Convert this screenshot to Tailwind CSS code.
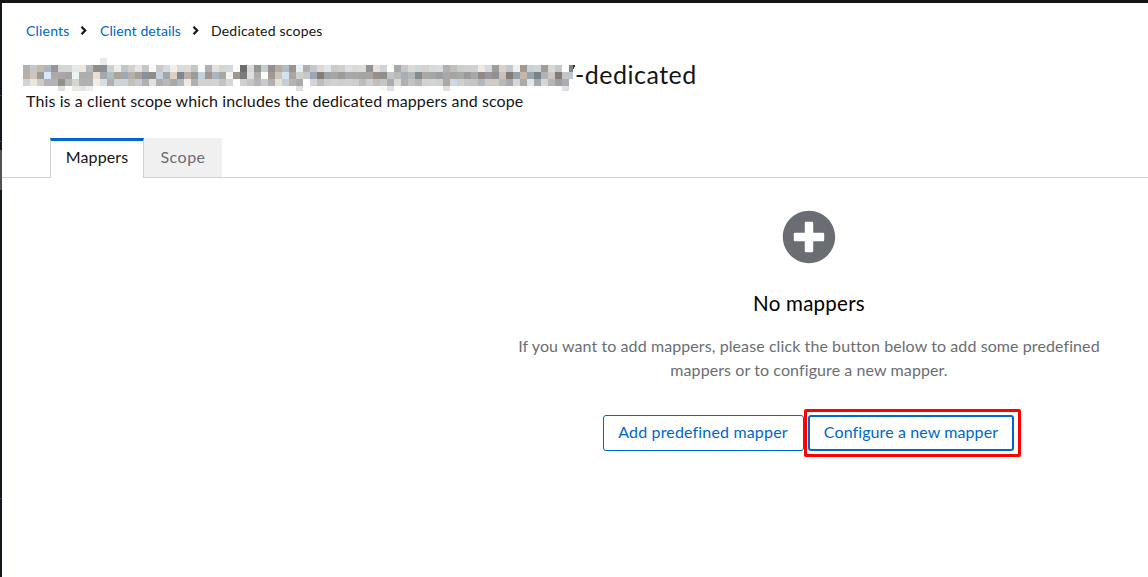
<!DOCTYPE html>
<html lang="en">
<head>
  <meta charset="UTF-8">
  <title>Dedicated scopes</title>
  <script src="https://cdn.jsdelivr.net/npm/@tailwindcss/browser@4"></script>
</head>
<body class="h-[577px] overflow-hidden bg-white font-['Lato','Noto_Sans',sans-serif] text-base text-[#151515] flex flex-col">
  <div class="h-[3px] shrink-0 bg-[#151515]"></div>
  <div class="flex flex-1 min-h-0">
    <!-- sidebar edge -->
    <aside class="w-[2px] shrink-0 bg-[#12191e] flex flex-col">
      <div class="mt-[92px] h-px bg-[#3c3f42]"></div>
      <div class="mt-[45px] h-px bg-[#3c3f42]"></div>
      <div class="mt-2 h-10 bg-[#4f5255]"></div>
      <div class="mt-[308px] h-px bg-[#3c3f42]"></div>
    </aside>

    <main class="flex-1 min-w-0">
      <nav class="flex items-center pl-6 pt-[16px] pb-px h-[39px] text-sm leading-[21px] whitespace-nowrap">
        <a href="#" class="w-[44px] text-[#06c] tracking-[0.2px]">Clients</a>
        <svg class="ml-[9px] mr-[12px] w-[9px] h-[9px]" viewBox="0 0 9 9" fill="none" stroke="#151515" stroke-width="2.2"><path d="M2.500 .8 6.200 4.500 2.500 8.200"/></svg>
        <a href="#" class="w-[81px] text-[#06c] tracking-[0.1px]">Client details</a>
        <svg class="ml-[10px] mr-[11px] w-[9px] h-[9px]" viewBox="0 0 9 9" fill="none" stroke="#151515" stroke-width="2.2"><path d="M2.500 .8 6.200 4.500 2.500 8.200"/></svg>
        <span class="tracking-[0.2px]">Dedicated scopes</span>
      </nav>

      <header class="pl-[21px]">
        <h1 class="flex h-[49px] pt-[16px] text-2xl leading-[32px] whitespace-nowrap">
          <svg id="clientId" class="w-[552px] h-[33px] shrink-0" viewBox="0 0 552 33" shape-rendering="crispEdges"></svg>
          <span class="text-[25px] tracking-[0.5px]">-dedicated</span>
        </h1>
        <p class="pl-[3px] leading-[24px] -mt-[2px] tracking-[0.11px]">This is a client scope which includes the dedicated mappers and scope</p>
      </header>

      <div class="mt-[22px] h-[43px] pt-[3px] flex">
        <div class="w-12 border-b border-[#d2d2d2]"></div>
        <button class="w-[94px] border-t-3 border-t-[#06c] border-x border-x-[#d2d2d2] pb-[5px] tracking-[0.1px]">Mappers</button>
        <button class="w-[78px] bg-[#f0f0f0] border-b border-[#d2d2d2] text-[#6a6e73] pb-px tracking-[0.5px]">Scope</button>
        <div class="flex-1 border-b border-[#d2d2d2]"></div>
      </div>

      <section class="ml-[467px] w-[680px] pt-8 flex flex-col items-center text-center">
        <svg class="w-[54px] h-[54px]" viewBox="0 0 512 512" fill="#6a6e73"><path d="M256 8C119 8 8 119 8 256s111 248 248 248 248-111 248-248S393 8 256 8zm144 276c0 6.600-5.400 12-12 12h-92v92c0 6.600-5.400 12-12 12h-56c-6.600 0-12-5.400-12-12v-92h-92c-6.600 0-12-5.400-12-12v-56c0-6.600 5.400-12 12-12h92v-92c0-6.600 5.400-12 12-12h56c6.600 0 12 5.400 12 12v92h92c6.600 0 12 5.400 12 12v56z"/></svg>
        <h2 class="mt-[24px] text-[20.500px] leading-[30px] text-black tracking-[0.25px]">No mappers</h2>
        <p class="mt-4 w-[600px] leading-6 text-[#6a6e73] tracking-[0.09px]">If you want to add mappers, please click the button below to add some predefined<br>mappers or to configure a new mapper.</p>
        <div class="mt-[33px] mr-[2px] flex gap-1 text-[#06c]">
          <button class="w-[201px] h-9 border border-[#06c] rounded-[3px] pb-[2px] tracking-[0.16px]">Add predefined mapper</button>
          <div class="relative">
            <button class="w-[206px] h-9 border-2 border-[#06c] rounded-[3px] pb-[2px] pl-px tracking-[0.1px]">Configure a new mapper</button>
            <div class="absolute -top-[6px] -bottom-[6px] -left-[4px] -right-[7px] border-3 border-[#ff0000] rounded-[2px]"></div>
          </div>
        </div>
      </section>
    </main>
  </div>

  <script>
    // pixelated client id, one 7px cell per colour
    const rows = [
      [65, 'b7b0ad c3c8ca c2b8ae aeb4bf 95969a d5d5d1 d3d7da e5e7e8 efe7df b8b8b9 928c88 85909a d2cecd eceeed c3c7cb d5d1cf e4e7e9 c7c7c7 f7f9fb cbc8c7 d8dbde f3efeb dbdbda dcdbdb c4c8c5 fbfdff b0b0b0 e2e2e2 d9d4d1 d3d8dc fdfdf8 6d6d70 d9d9d5 939391 c8cccc 909092 b5aca0 b5bbc6 999592 e6f0f8 b0b0b0 c5c7ca ddd7d5 e3e5e7 cbcac9 d0cfcf dce0e6 dcd9d7 dddddd 939393 e2e2e2 cfd4d8 fffff8 a9a8a8 c6c9cb dddad6 d0d5da d5d1cf d5dadd d9dde0 b0b0b0 c5bdb7 cbcecf d0d0d0 cfd2d4 ede8e5 d5dae0 9f9c99 d8d3d1 c3c8cd f2efed a09790 c6d1da d0d5d8 a09c98 d8d8d8 c5c9c9 ffffff 8b817b'],
      [72, 'b7afab d0c5b8 9b9b99 d9e6f3 aaaaaa a8a8a8 a5a4a3 ecf3f3 adadad aeaeae eaddd4 a5a8aa b2bcc7 a9a59b a0a8b2 b4b0ad a89e95 8b8f98 918d85 c6d0d9 a3a6aa ddd1c5 808692 b8afa6 999c99 c6d0dc a09890 adb4bc a5a8a7 f3f3f3 9a958f 7c7c7c dde0e2 adadad fffffb 9f9894 cfc5bb d6e1ef aba69f cfcfcb c5c7ca a0a7b2 827e7a a2a2a2 a6a6a6 9b9b9b a8a8a8 a8a8a8 a5a5a3 a5a5a5 989088 918f8d c0c4c4 b8babb acafb2 b5b8ba 868a8d a9a9a9 a6a6a6 9f9f9f a8a8a8 a5a5a5 a9a9a9 9b9b9b a8a8a8 928a87 999797 8f9193 c8c2bd 827b77 96a0a9 c4b8ad 9aa4ac 7d8287 b0b4b8 cbc7c3 827b78 c3c5c7 b8c9da'],
      [79, 'd4d3d1 e8e6df cfcac5 b0b4ba b1b3b4 90918d b5b8bc d6d4cf b1b1b1 b1b1b1 f3ebe6 d8dde2 b0b0b0 d0d4d8 ced2d6 c4c0bb c8cacd b0b0b0 e0e0e0 aeaeae b8b8b8 a9aaa7 b5b8be efe9e4 b0b0b0 d0d2d6 d0d1d3 d2d3d4 c3c3c1 d6d6d6 ffffff d0d0d0 c8c4c0 b5b5b5 c6cbcf b0b0b2 e6e0da c7cdd4 b4b4b4 a9aaac fffef8 d2d6da c2bcb9 cecece d2d2d2 cecece d0d0d0 cecece c0bbb6 c9ced2 c2bfbb c2c7c9 acacb0 dadada b0b1b3 c4c2bf b5b8bb d2d2d2 d4d4d4 d0d0d0 b0a7a1 d0d9e3 cfcfcf c8c8c8 c4c4c4 b3b7bb cbcccf d1cbc5 b8b8b8 a8a9aa d6d6d6 aaaaaa e2e5e8 a5a9ad d4d6da b7b4b2 9f9fa1 a9adb2 ffffff'],
    ];
    const strays = [[11, 58, 'eaeaea'], [5, 86, 'e0e0e0'], [7, 86, 'ede7e3'], [8, 86, 'e3e3e3'], [9, 86, 'ebeff3'], [39, 86, 'e0e0e0'], [51, 86, 'fdf8f2'], [52, 86, 'e0e2e8'], [60, 86, 'e0e0e0'], [77, 86, 'e0e0e0']];
    let cells = '';
    const cell = (i, y, c) => {
      cells += `<rect x="${i * 7}" y="${y - 58}" width="${i === 78 ? 4 : 7}" height="${y === 86 ? 5 : 7}" fill="#${c}"/>`;
    };
    rows.forEach(([y, colors]) => colors.split(' ').forEach((c, i) => cell(i, y, c)));
    strays.forEach(s => cell(...s));
    cells += '<path d="M550 7h2l-1 4h-1z" fill="#333"/>';
    document.getElementById('clientId').innerHTML = cells;
  </script>
</body>
</html>
